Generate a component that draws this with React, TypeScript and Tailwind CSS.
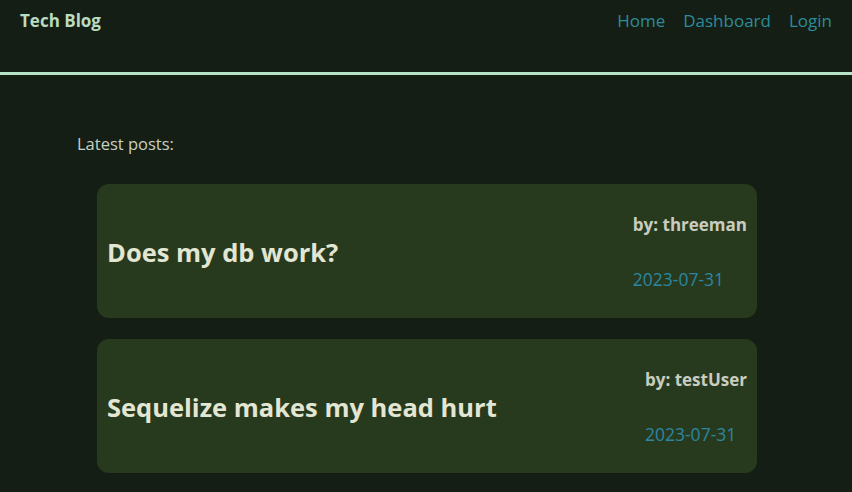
const posts = [
  { id: 1, title: 'Does my db work?', author: 'threeman', date: '2023-07-31' },
  { id: 2, title: 'Sequelize makes my head hurt', author: 'testUser', date: '2023-07-31' },
];

export default function App() {
  return (
    <div className="min-h-screen bg-[#151e14] font-['Open_Sans',sans-serif] text-[#d9dfcf]">
      <header className="h-[75px] border-b-[3px] border-[#b6e3c6] flex justify-between px-5 pt-[9px]">
        <h1 className="text-[17px] font-bold text-[#b9dcc0] leading-6">Tech Blog</h1>
        <nav className="flex gap-[18px] text-[17px] text-[#2b8c9c] leading-6">
          <a href="#">Home</a>
          <a href="#">Dashboard</a>
          <a href="#">Login</a>
        </nav>
      </header>

      <main className="w-[698px] mx-auto pt-[57px]">
        <p className="text-[16.5px] leading-6 text-[#c8d0c0]">Latest posts:</p>
        <div className="flex flex-col gap-[21px] mt-[28px] ml-5 w-[660px]">
          {posts.map((post) => (
            <div
              key={post.id}
              className="h-[134px] rounded-xl bg-[#283a1e] flex items-center justify-between px-[10px] pt-[2px]"
            >
              <h2 className="text-[25.5px] font-bold text-[#e2e6d3]">{post.title}</h2>
              <div className="flex flex-col items-start gap-[30px]">
                <span className="text-[17px] font-bold leading-6 text-[#c9cdc0]">by: {post.author}</span>
                <span className="text-[17.5px] leading-6 text-[#2b86a2]">{post.date}</span>
              </div>
            </div>
          ))}
        </div>
      </main>
    </div>
  );
}
